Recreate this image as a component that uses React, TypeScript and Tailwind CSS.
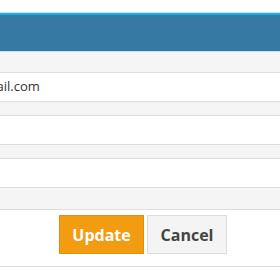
export default function App() {
  return (
    <div className="w-[280px] h-[280px] bg-white overflow-hidden font-['Open_Sans',sans-serif]">
      <div className="h-[12px] bg-white" />
      <div className="h-px bg-[#bfe6f5]" />
      <div className="h-[2px] bg-[#1cb0de]" />
      <div className="h-[36px] bg-[#367aa4]" />
      <div className="h-px bg-[#cddfea]" />
      <div className="bg-[#f5f5f5] pt-[20px] pb-[21px] flex flex-col gap-[13px]">
        <div className="h-[30px] bg-white border-y border-[#dddddd] flex items-center overflow-hidden">
          <span className="text-[13px] text-[#333] whitespace-nowrap -ml-[57px]">test@gmail.com</span>
        </div>
        <div className="h-[30px] bg-white border-y border-[#dddddd]" />
        <div className="h-[30px] bg-white border-y border-[#dddddd]" />
      </div>
      <div className="border-t border-b border-[#dddddd] bg-white pt-[5px] pb-[12px] flex pl-[59px] gap-[3px]">
        <button className="w-[85px] h-[39px] bg-[#f39c12] border border-[#e08e0b] text-white font-bold text-[16px]">
          Update
        </button>
        <button className="w-[80px] h-[39px] bg-[#f4f4f4] border border-[#dddddd] text-[#444] font-bold text-[16px]">
          Cancel
        </button>
      </div>
    </div>
  );
}
